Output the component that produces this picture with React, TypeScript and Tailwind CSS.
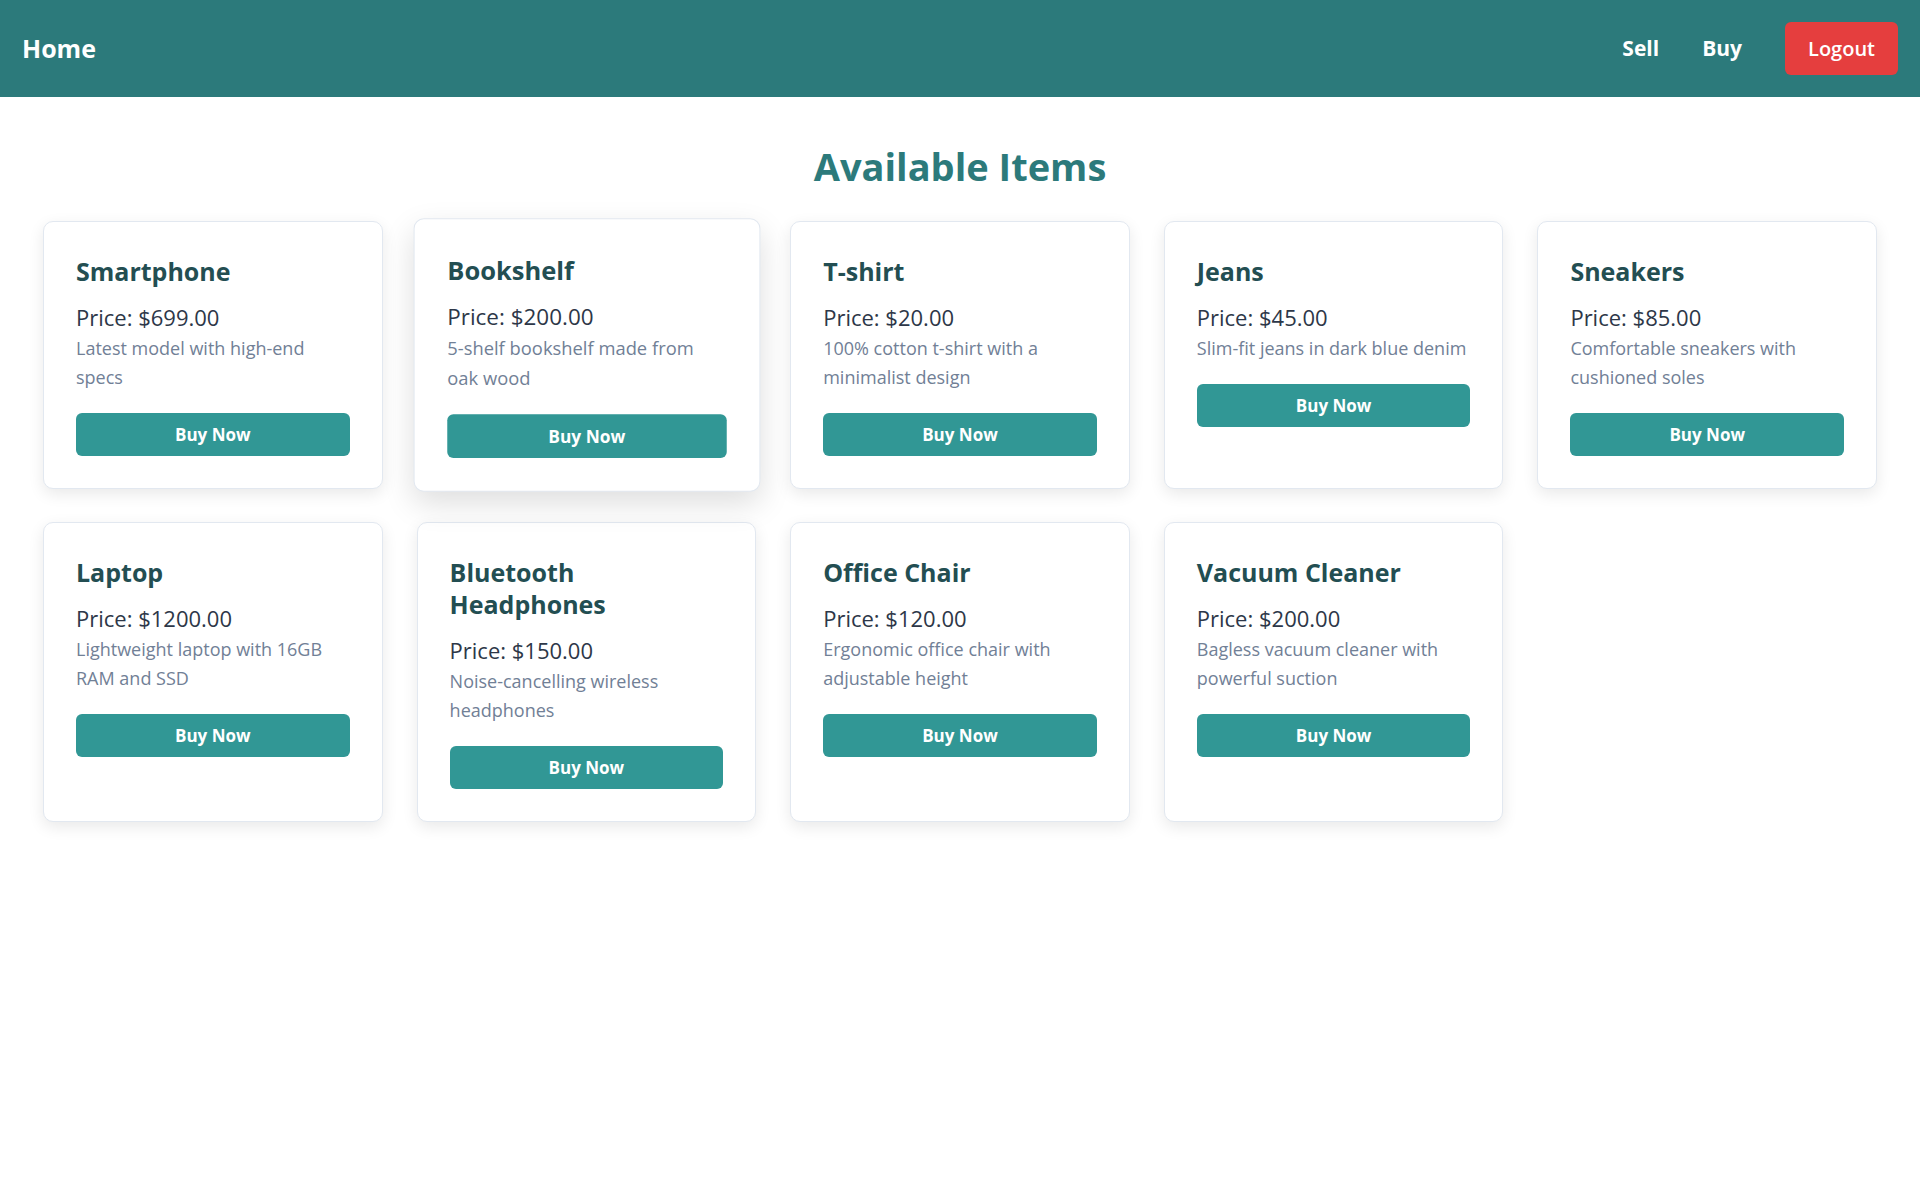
const items = [
  { name: "Smartphone", price: "699.00", desc: "Latest model with high-end specs" },
  { name: "Bookshelf", price: "200.00", desc: "5-shelf bookshelf made from oak wood" },
  { name: "T-shirt", price: "20.00", desc: "100% cotton t-shirt with a minimalist design" },
  { name: "Jeans", price: "45.00", desc: "Slim-fit jeans in dark blue denim" },
  { name: "Sneakers", price: "85.00", desc: "Comfortable sneakers with cushioned soles" },
  { name: "Laptop", price: "1200.00", desc: "Lightweight laptop with 16GB RAM and SSD" },
  { name: "Bluetooth Headphones", price: "150.00", desc: "Noise-cancelling wireless headphones" },
  { name: "Office Chair", price: "120.00", desc: "Ergonomic office chair with adjustable height" },
  { name: "Vacuum Cleaner", price: "200.00", desc: "Bagless vacuum cleaner with powerful suction" },
];

// the Bookshelf card is the one under the mouse in the screenshot
const HOVERED = 1;

const ItemCard = ({
  item,
  hovered,
}: {
  item: (typeof items)[number];
  hovered: boolean;
}) => (
  <div
    className={`bg-white border border-[#e2e8f0] rounded-[10px] px-8 pt-[33px] pb-8 ${
      hovered
        ? "scale-[1.02] relative z-10 shadow-[0_12px_30px_rgba(0,0,0,0.13)]"
        : "shadow-[0_5px_16px_rgba(0,0,0,0.09)]"
    }`}
  >
    <h2 className="text-[25px] font-bold leading-[32px] text-[#234e52]">{item.name}</h2>
    <p className="mt-[14px] text-[22px] leading-[32px] text-[#2d3748]">Price: ${item.price}</p>
    <p className="mt-px text-[18px] leading-[29px] text-[#718096]">{item.desc}</p>
    <button className="mt-[21px] w-full h-[43px] rounded-md bg-[#319795] text-white text-[17px] font-bold">
      Buy Now
    </button>
  </div>
);

export default function App() {
  return (
    <div className="min-h-screen bg-white font-['Open_Sans',sans-serif]">
      <nav className="h-[97px] bg-[#2c7a7b] px-[22px] flex items-center justify-between text-white">
        <span className="text-[25px] font-bold">Home</span>
        <div className="flex items-center gap-[43px]">
          <a className="text-[21px] font-bold">Sell</a>
          <a className="text-[21px] font-bold">Buy</a>
          <button className="h-[53px] px-[23px] rounded-md bg-[#e53e3e] text-xl font-semibold">
            Logout
          </button>
        </div>
      </nav>

      <main className="px-[43px]">
        <h1 className="mt-[46px] mb-8 text-center text-[38px] leading-[46px] font-bold text-[#2c7a7b]">
          Available Items
        </h1>
        <div className="grid grid-cols-5 gap-x-[34px] gap-y-[33px]">
          {items.map((item, i) => (
            <ItemCard key={item.name} item={item} hovered={i === HOVERED} />
          ))}
        </div>
      </main>
    </div>
  );
}
